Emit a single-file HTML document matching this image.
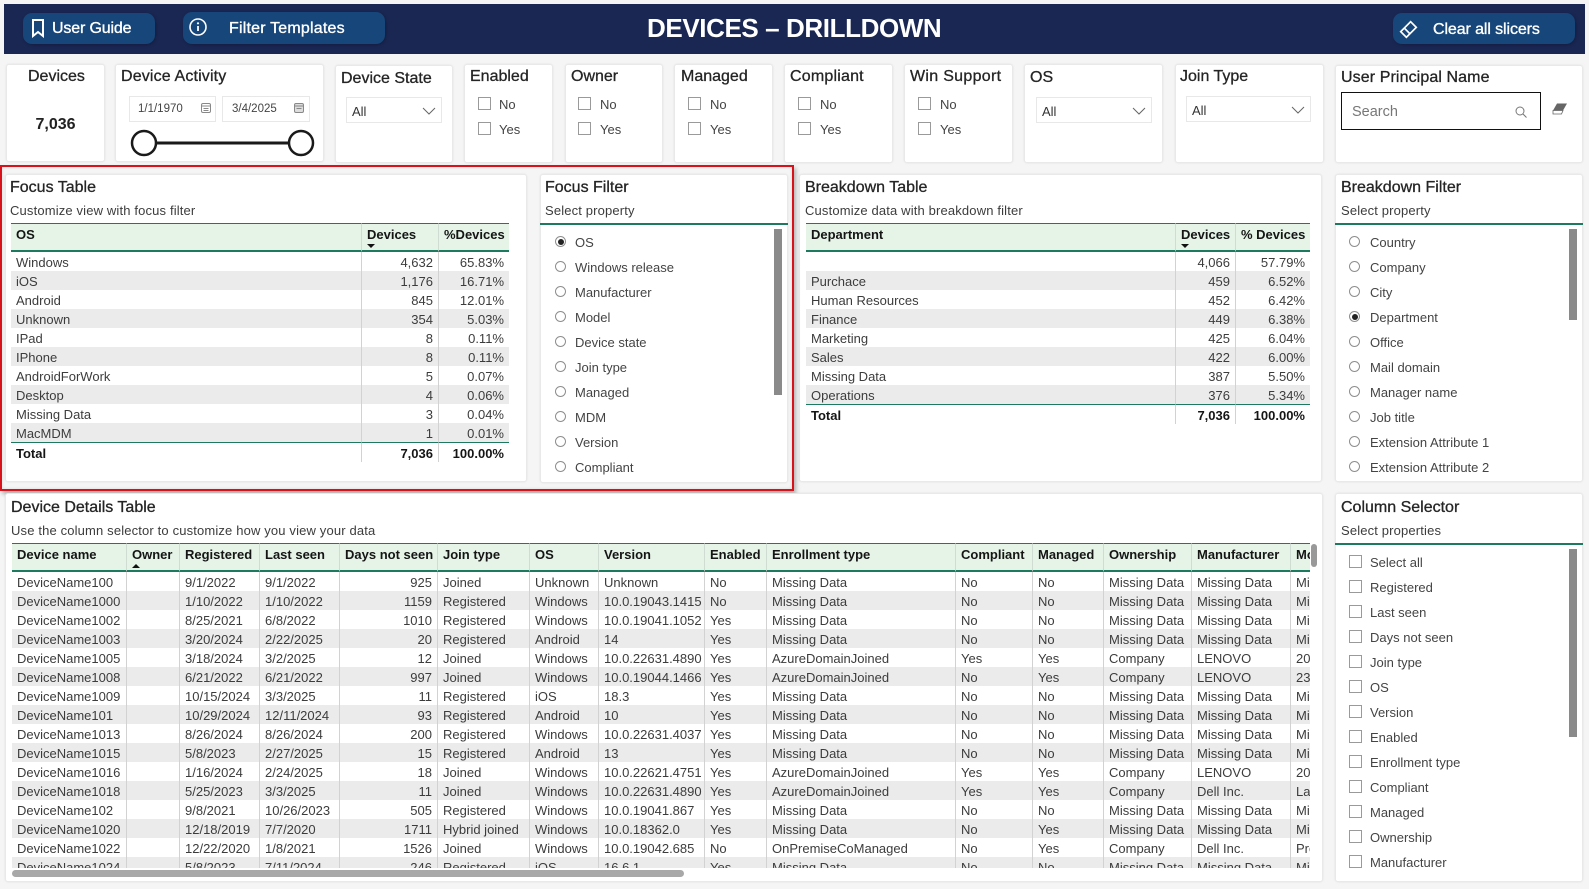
<!DOCTYPE html>
<html lang="en">
<head>
<meta charset="utf-8">
<title>Devices – Drilldown</title>
<style>
*{box-sizing:border-box}
html,body{margin:0;padding:0}
body{width:1589px;height:889px;position:relative;overflow:hidden;background:#f5f5f5;font-family:"Liberation Sans",sans-serif;color:#3a3a3a;font-size:13px}
.a,.t,.s,.l,.bt,i,.c{position:absolute}
.c{background:#fff;border:1px solid #e9e9e9;border-radius:3px;box-shadow:0 0 2px rgba(0,0,0,.08)}
.t{font-size:16px;line-height:20px;color:#252525;letter-spacing:0;-webkit-text-stroke:.3px #252525;white-space:nowrap}
.s{font-size:13px;line-height:18px;color:#3c3c3c;letter-spacing:.15px;white-space:nowrap}
.l{font-size:13px;line-height:18px;color:#444;white-space:nowrap}
.bt{background:#17467a;border-radius:9px;box-shadow:1px 1px 3px rgba(0,0,0,.25)}
.bx{position:absolute;color:#fff;font-size:16px;line-height:20px;letter-spacing:-.15px;-webkit-text-stroke:.35px #fff;white-space:nowrap}
i.k{width:13px;height:13px;border:1px solid #9a9a9a;background:#fff}
i.r{width:11px;height:11px;border:1px solid #8e8e8e;border-radius:50%;background:#fff}
i.r.on:after{content:"";position:absolute;left:1.5px;top:1.5px;width:6px;height:6px;border-radius:50%;background:#222}
.dd{position:absolute;height:26px;border:1px solid #e8e8e8;background:#fff;line-height:28px;padding-left:5px;font-size:13px;color:#333}
.ln{position:absolute;height:1.5px;background:#1d7a5f}
.sb{position:absolute;width:8px;background:#8a8a8a}
table{position:absolute;border-collapse:separate;border-spacing:0;table-layout:fixed;font-size:13px}
th{height:29px;background:#e5f4e7;border-top:1px solid #1d7a5f;border-bottom:2px solid #1d7a5f;border-right:1px solid #cfdcd2;text-align:left;vertical-align:top;padding:3px 4px 0 5px;line-height:16px;color:#151515;white-space:nowrap;overflow:hidden;position:relative}
td{height:19px;line-height:17px;padding:2px 5px 0;white-space:nowrap;overflow:hidden;border-right:1px solid #d2d2d2;color:#3c3c3c}
th:last-child,td:last-child{border-right:0}
tbody tr:nth-child(even) td{background:#ebebeb}
td.n,tfoot td.n{text-align:right}
tfoot td{height:20px;line-height:17px;padding-top:2px;font-weight:bold;color:#151515;border-top:1.5px solid #1d7a5f}
.dn,.up{position:absolute;width:0;height:0;border-left:4px solid transparent;border-right:4px solid transparent}
.dn{border-top:4px solid #111}
.up{border-bottom:4px solid #111}
</style>
</head>
<body>

<!-- header -->
<div class="a" style="left:4px;top:4px;width:1581px;height:50px;background:#1a2753"></div>
<div class="bt" style="left:23px;top:13px;width:132px;height:31px"></div>
<svg class="a" style="left:30px;top:18px" width="16" height="20" viewBox="0 0 16 20"><path d="M3 2h10v16l-5-4-5 4z" fill="none" stroke="#fff" stroke-width="2"/></svg>
<div class="bx" style="left:52px;top:19px">User Guide</div>
<div class="bt" style="left:183px;top:12px;width:202px;height:32px"></div>
<svg class="a" style="left:188px;top:17px" width="20" height="20" viewBox="0 0 20 20"><circle cx="10" cy="10" r="8" fill="none" stroke="#fff" stroke-width="1.6"/><path d="M10 9v5" stroke="#fff" stroke-width="1.8"/><circle cx="10" cy="6.3" r="1.1" fill="#fff"/></svg>
<div class="bx" style="left:229px;top:19px;letter-spacing:.2px">Filter Templates</div>
<div class="a" style="left:647px;top:12px;width:300px;line-height:33px;color:#fff;font-size:26px;font-weight:bold;letter-spacing:-.4px;white-space:nowrap">DEVICES – DRILLDOWN</div>
<div class="bt" style="left:1393px;top:13px;width:182px;height:31px"></div>
<svg class="a" style="left:1398px;top:19px" width="21" height="21" viewBox="0 0 21 21"><g transform="rotate(-45 10.500 10.500)" fill="none" stroke="#fff" stroke-width="1.700"><rect x="3.500" y="6.500" width="14" height="8"/><path d="M8.500 6.500v8"/></g></svg>
<div class="bx" style="left:1433px;top:20px;letter-spacing:-.1px">Clear all slicers</div>

<!-- slicer cards -->
<div class="c" style="left:6px;top:64px;width:99px;height:98px"></div>
<div class="t" style="left:28px;top:67px">Devices</div>
<div class="a" style="left:6px;top:115px;width:99px;text-align:center;font-size:16px;line-height:20px;font-weight:bold;color:#222">7,036</div>

<div class="c" style="left:115px;top:64px;width:209px;height:98px"></div>
<div class="t" style="left:121px;top:67px;letter-spacing:.15px">Device Activity</div>
<div class="a" style="left:129px;top:96px;width:87px;height:26px;border:1px solid #e8e8e8;font-size:11.5px;line-height:25px;padding-left:8px;color:#444">1/1/1970</div>
<svg class="a" style="left:200px;top:102px" width="12" height="12" viewBox="0 0 12 12"><rect x="1.500" y="1.500" width="9" height="9" rx="1.500" fill="none" stroke="#888"/><path d="M2 4h8M3.500 6.500h5M3.500 8.500h5" stroke="#888"/></svg>
<div class="a" style="left:222px;top:96px;width:88px;height:26px;border:1px solid #e8e8e8;font-size:11.5px;line-height:25px;padding-left:9px;color:#444">3/4/2025</div>
<svg class="a" style="left:293px;top:102px" width="12" height="12" viewBox="0 0 12 12"><rect x="1.500" y="1.500" width="9" height="9" rx="1.500" fill="#ddd" stroke="#888"/><path d="M2 4h8M3.500 6.500h5" stroke="#888"/></svg>
<svg class="a" style="left:127px;top:126px" width="190" height="34" viewBox="0 0 190 34"><path d="M17 17h157" stroke="#1a1a1a" stroke-width="3"/><circle cx="17" cy="17" r="12" fill="#fff" stroke="#1a1a1a" stroke-width="2.500"/><circle cx="174" cy="17" r="12" fill="#fff" stroke="#1a1a1a" stroke-width="2.500"/></svg>

<div class="c" style="left:335px;top:65px;width:118px;height:98px"></div>
<div class="t" style="left:341px;top:69px">Device State</div>
<div class="dd" style="left:346px;top:97px;width:96px">All</div>
<svg class="a" style="left:422px;top:106px" width="14" height="10" viewBox="0 0 14 10"><path d="M1 2l6 6 6-6" fill="none" stroke="#666"/></svg>

<div class="c" style="left:464px;top:64px;width:89px;height:99px"></div>
<div class="t" style="left:470px;top:67px">Enabled</div>
<i class="k" style="left:478px;top:97px"></i><div class="l" style="left:499px;top:96px">No</div>
<i class="k" style="left:478px;top:122px"></i><div class="l" style="left:499px;top:121px">Yes</div>

<div class="c" style="left:565px;top:64px;width:98px;height:99px"></div>
<div class="t" style="left:571px;top:67px">Owner</div>
<i class="k" style="left:578px;top:97px"></i><div class="l" style="left:600px;top:96px">No</div>
<i class="k" style="left:578px;top:122px"></i><div class="l" style="left:600px;top:121px">Yes</div>

<div class="c" style="left:674px;top:64px;width:99px;height:99px"></div>
<div class="t" style="left:681px;top:67px">Managed</div>
<i class="k" style="left:688px;top:97px"></i><div class="l" style="left:710px;top:96px">No</div>
<i class="k" style="left:688px;top:122px"></i><div class="l" style="left:710px;top:121px">Yes</div>

<div class="c" style="left:784px;top:64px;width:109px;height:99px"></div>
<div class="t" style="left:790px;top:67px;letter-spacing:.2px">Compliant</div>
<i class="k" style="left:798px;top:97px"></i><div class="l" style="left:820px;top:96px">No</div>
<i class="k" style="left:798px;top:122px"></i><div class="l" style="left:820px;top:121px">Yes</div>

<div class="c" style="left:904px;top:64px;width:109px;height:99px"></div>
<div class="t" style="left:910px;top:67px;letter-spacing:.3px">Win Support</div>
<i class="k" style="left:918px;top:97px"></i><div class="l" style="left:940px;top:96px">No</div>
<i class="k" style="left:918px;top:122px"></i><div class="l" style="left:940px;top:121px">Yes</div>

<div class="c" style="left:1024px;top:64px;width:139px;height:99px"></div>
<div class="t" style="left:1030px;top:68px">OS</div>
<div class="dd" style="left:1036px;top:97px;width:116px">All</div>
<svg class="a" style="left:1132px;top:106px" width="14" height="10" viewBox="0 0 14 10"><path d="M1 2l6 6 6-6" fill="none" stroke="#666"/></svg>

<div class="c" style="left:1175px;top:64px;width:149px;height:99px"></div>
<div class="t" style="left:1180px;top:67px">Join Type</div>
<div class="dd" style="left:1186px;top:96px;width:125px">All</div>
<svg class="a" style="left:1291px;top:105px" width="14" height="10" viewBox="0 0 14 10"><path d="M1 2l6 6 6-6" fill="none" stroke="#666"/></svg>

<div class="c" style="left:1335px;top:65px;width:248px;height:98px"></div>
<div class="t" style="left:1341px;top:68px;letter-spacing:.1px">User Principal Name</div>
<div class="a" style="left:1341px;top:92px;width:200px;height:38px;border:1.500px solid #111;background:#fff;font-size:14.500px;line-height:38px;padding-left:10px;color:#777">Search</div>
<svg class="a" style="left:1514px;top:105px" width="14" height="14" viewBox="0 0 14 14"><circle cx="6" cy="6" r="4" fill="none" stroke="#777"/><path d="M9 9l3.500 3.500" stroke="#777"/></svg>
<svg class="a" style="left:1552px;top:102px" width="16" height="14" viewBox="0 0 16 14"><path d="M5 1.500h10l-4 7H1z" fill="#666"/><path d="M1 8.500h10l-1.500 3.500H1z" fill="#fff" stroke="#666" stroke-width=".8"/></svg>

<!-- middle row cards -->
<div class="c" style="left:5px;top:174px;width:522px;height:308px"></div>
<div class="c" style="left:540px;top:174px;width:248px;height:309px"></div>
<div class="c" style="left:799px;top:174px;width:523px;height:308px"></div>
<div class="c" style="left:1335px;top:174px;width:248px;height:308px"></div>

<!-- Focus Table -->
<div class="t" style="left:10px;top:178px">Focus Table</div>
<div class="s" style="left:10px;top:202px">Customize view with focus filter</div>
<table style="left:11px;top:223px;width:498px">
<col style="width:351px"><col style="width:77px"><col style="width:70px">
<thead><tr><th>OS</th><th>Devices<span class="dn" style="left:2px;top:20px;margin-left:3px"></span></th><th>%Devices</th></tr></thead>
<tbody>
<tr><td>Windows</td><td class="n">4,632</td><td class="n">65.83%</td></tr>
<tr><td>iOS</td><td class="n">1,176</td><td class="n">16.71%</td></tr>
<tr><td>Android</td><td class="n">845</td><td class="n">12.01%</td></tr>
<tr><td>Unknown</td><td class="n">354</td><td class="n">5.03%</td></tr>
<tr><td>IPad</td><td class="n">8</td><td class="n">0.11%</td></tr>
<tr><td>IPhone</td><td class="n">8</td><td class="n">0.11%</td></tr>
<tr><td>AndroidForWork</td><td class="n">5</td><td class="n">0.07%</td></tr>
<tr><td>Desktop</td><td class="n">4</td><td class="n">0.06%</td></tr>
<tr><td>Missing Data</td><td class="n">3</td><td class="n">0.04%</td></tr>
<tr><td>MacMDM</td><td class="n">1</td><td class="n">0.01%</td></tr>
</tbody>
<tfoot><tr><td>Total</td><td class="n">7,036</td><td class="n">100.00%</td></tr></tfoot>
</table>

<!-- Focus Filter -->
<div class="t" style="left:545px;top:178px">Focus Filter</div>
<div class="s" style="left:545px;top:202px">Select property</div>
<div class="ln" style="left:540px;top:223px;width:248px"></div>
<i class="r on" style="left:555px;top:236px"></i><div class="l" style="left:575px;top:234px">OS</div>
<i class="r" style="left:555px;top:261px"></i><div class="l" style="left:575px;top:259px">Windows release</div>
<i class="r" style="left:555px;top:286px"></i><div class="l" style="left:575px;top:284px">Manufacturer</div>
<i class="r" style="left:555px;top:311px"></i><div class="l" style="left:575px;top:309px">Model</div>
<i class="r" style="left:555px;top:336px"></i><div class="l" style="left:575px;top:334px">Device state</div>
<i class="r" style="left:555px;top:361px"></i><div class="l" style="left:575px;top:359px">Join type</div>
<i class="r" style="left:555px;top:386px"></i><div class="l" style="left:575px;top:384px">Managed</div>
<i class="r" style="left:555px;top:411px"></i><div class="l" style="left:575px;top:409px">MDM</div>
<i class="r" style="left:555px;top:436px"></i><div class="l" style="left:575px;top:434px">Version</div>
<i class="r" style="left:555px;top:461px"></i><div class="l" style="left:575px;top:459px">Compliant</div>
<div class="sb" style="left:774px;top:229px;height:166px"></div>

<!-- Breakdown Table -->
<div class="t" style="left:805px;top:178px">Breakdown Table</div>
<div class="s" style="left:805px;top:202px">Customize data with breakdown filter</div>
<table style="left:806px;top:223px;width:504px">
<col style="width:370px"><col style="width:60px"><col style="width:74px">
<thead><tr><th>Department</th><th>Devices<span class="dn" style="left:2px;top:20px;margin-left:3px"></span></th><th>% Devices</th></tr></thead>
<tbody>
<tr><td>&nbsp;</td><td class="n">4,066</td><td class="n">57.79%</td></tr>
<tr><td>Purchace</td><td class="n">459</td><td class="n">6.52%</td></tr>
<tr><td>Human Resources</td><td class="n">452</td><td class="n">6.42%</td></tr>
<tr><td>Finance</td><td class="n">449</td><td class="n">6.38%</td></tr>
<tr><td>Marketing</td><td class="n">425</td><td class="n">6.04%</td></tr>
<tr><td>Sales</td><td class="n">422</td><td class="n">6.00%</td></tr>
<tr><td>Missing Data</td><td class="n">387</td><td class="n">5.50%</td></tr>
<tr><td>Operations</td><td class="n">376</td><td class="n">5.34%</td></tr>
</tbody>
<tfoot><tr><td>Total</td><td class="n">7,036</td><td class="n">100.00%</td></tr></tfoot>
</table>

<!-- Breakdown Filter -->
<div class="t" style="left:1341px;top:178px">Breakdown Filter</div>
<div class="s" style="left:1341px;top:202px">Select property</div>
<div class="ln" style="left:1335px;top:223px;width:248px"></div>
<i class="r" style="left:1349px;top:236px"></i><div class="l" style="left:1370px;top:234px">Country</div>
<i class="r" style="left:1349px;top:261px"></i><div class="l" style="left:1370px;top:259px">Company</div>
<i class="r" style="left:1349px;top:286px"></i><div class="l" style="left:1370px;top:284px">City</div>
<i class="r on" style="left:1349px;top:311px"></i><div class="l" style="left:1370px;top:309px">Department</div>
<i class="r" style="left:1349px;top:336px"></i><div class="l" style="left:1370px;top:334px">Office</div>
<i class="r" style="left:1349px;top:361px"></i><div class="l" style="left:1370px;top:359px">Mail domain</div>
<i class="r" style="left:1349px;top:386px"></i><div class="l" style="left:1370px;top:384px">Manager name</div>
<i class="r" style="left:1349px;top:411px"></i><div class="l" style="left:1370px;top:409px">Job title</div>
<i class="r" style="left:1349px;top:436px"></i><div class="l" style="left:1370px;top:434px">Extension Attribute 1</div>
<i class="r" style="left:1349px;top:461px"></i><div class="l" style="left:1370px;top:459px">Extension Attribute 2</div>
<div class="sb" style="left:1569px;top:229px;height:91px"></div>

<!-- Red highlight -->
<div class="a" style="left:0;top:165px;width:794px;height:326px;border:2px solid #d8121b;box-shadow:2px 3px 4px rgba(0,0,0,.28),inset 0 0 3px rgba(0,0,0,.12)"></div>

<!-- Bottom cards -->
<div class="c" style="left:5px;top:493px;width:1318px;height:389px"></div>
<div class="c" style="left:1335px;top:493px;width:248px;height:389px"></div>

<!-- Device Details -->
<div class="t" style="left:11px;top:498px">Device Details Table</div>
<div class="s" style="left:11px;top:522px">Use the column selector to customize how you view your data</div>
<div class="a" style="left:12px;top:543px;width:1298px;height:325px;overflow:hidden">
<table style="left:0;top:0;width:1301px">
<col style="width:115px"><col style="width:53px"><col style="width:80px"><col style="width:80px"><col style="width:98px"><col style="width:92px"><col style="width:69px"><col style="width:106px"><col style="width:62px"><col style="width:189px"><col style="width:77px"><col style="width:71px"><col style="width:88px"><col style="width:99px"><col style="width:22px">
<thead><tr><th>Device name</th><th>Owner<span class="up" style="left:5px;top:20px"></span></th><th>Registered</th><th>Last seen</th><th>Days not seen</th><th>Join type</th><th>OS</th><th>Version</th><th>Enabled</th><th>Enrollment type</th><th>Compliant</th><th>Managed</th><th>Ownership</th><th>Manufacturer</th><th>Model</th></tr></thead>
<tbody>
<tr><td>DeviceName100</td><td></td><td>9/1/2022</td><td>9/1/2022</td><td class="n">925</td><td>Joined</td><td>Unknown</td><td>Unknown</td><td>No</td><td>Missing Data</td><td>No</td><td>No</td><td>Missing Data</td><td>Missing Data</td><td>Missing</td></tr>
<tr><td>DeviceName1000</td><td></td><td>1/10/2022</td><td>1/10/2022</td><td class="n">1159</td><td>Registered</td><td>Windows</td><td>10.0.19043.1415</td><td>No</td><td>Missing Data</td><td>No</td><td>No</td><td>Missing Data</td><td>Missing Data</td><td>Missing</td></tr>
<tr><td>DeviceName1002</td><td></td><td>8/25/2021</td><td>6/8/2022</td><td class="n">1010</td><td>Registered</td><td>Windows</td><td>10.0.19041.1052</td><td>Yes</td><td>Missing Data</td><td>No</td><td>No</td><td>Missing Data</td><td>Missing Data</td><td>Missing</td></tr>
<tr><td>DeviceName1003</td><td></td><td>3/20/2024</td><td>2/22/2025</td><td class="n">20</td><td>Registered</td><td>Android</td><td>14</td><td>Yes</td><td>Missing Data</td><td>No</td><td>No</td><td>Missing Data</td><td>Missing Data</td><td>Missing</td></tr>
<tr><td>DeviceName1005</td><td></td><td>3/18/2024</td><td>3/2/2025</td><td class="n">12</td><td>Joined</td><td>Windows</td><td>10.0.22631.4890</td><td>Yes</td><td>AzureDomainJoined</td><td>Yes</td><td>Yes</td><td>Company</td><td>LENOVO</td><td>20Q</td></tr>
<tr><td>DeviceName1008</td><td></td><td>6/21/2022</td><td>6/21/2022</td><td class="n">997</td><td>Joined</td><td>Windows</td><td>10.0.19044.1466</td><td>Yes</td><td>AzureDomainJoined</td><td>No</td><td>Yes</td><td>Company</td><td>LENOVO</td><td>234</td></tr>
<tr><td>DeviceName1009</td><td></td><td>10/15/2024</td><td>3/3/2025</td><td class="n">11</td><td>Registered</td><td>iOS</td><td>18.3</td><td>Yes</td><td>Missing Data</td><td>No</td><td>No</td><td>Missing Data</td><td>Missing Data</td><td>Missing</td></tr>
<tr><td>DeviceName101</td><td></td><td>10/29/2024</td><td>12/11/2024</td><td class="n">93</td><td>Registered</td><td>Android</td><td>10</td><td>Yes</td><td>Missing Data</td><td>No</td><td>No</td><td>Missing Data</td><td>Missing Data</td><td>Missing</td></tr>
<tr><td>DeviceName1013</td><td></td><td>8/26/2024</td><td>8/26/2024</td><td class="n">200</td><td>Registered</td><td>Windows</td><td>10.0.22631.4037</td><td>Yes</td><td>Missing Data</td><td>No</td><td>No</td><td>Missing Data</td><td>Missing Data</td><td>Missing</td></tr>
<tr><td>DeviceName1015</td><td></td><td>5/8/2023</td><td>2/27/2025</td><td class="n">15</td><td>Registered</td><td>Android</td><td>13</td><td>Yes</td><td>Missing Data</td><td>No</td><td>No</td><td>Missing Data</td><td>Missing Data</td><td>Missing</td></tr>
<tr><td>DeviceName1016</td><td></td><td>1/16/2024</td><td>2/24/2025</td><td class="n">18</td><td>Joined</td><td>Windows</td><td>10.0.22621.4751</td><td>Yes</td><td>AzureDomainJoined</td><td>Yes</td><td>Yes</td><td>Company</td><td>LENOVO</td><td>20</td></tr>
<tr><td>DeviceName1018</td><td></td><td>5/25/2023</td><td>3/3/2025</td><td class="n">11</td><td>Joined</td><td>Windows</td><td>10.0.22631.4890</td><td>Yes</td><td>AzureDomainJoined</td><td>Yes</td><td>Yes</td><td>Company</td><td>Dell Inc.</td><td>Latitude</td></tr>
<tr><td>DeviceName102</td><td></td><td>9/8/2021</td><td>10/26/2023</td><td class="n">505</td><td>Registered</td><td>Windows</td><td>10.0.19041.867</td><td>Yes</td><td>Missing Data</td><td>No</td><td>No</td><td>Missing Data</td><td>Missing Data</td><td>Missing</td></tr>
<tr><td>DeviceName1020</td><td></td><td>12/18/2019</td><td>7/7/2020</td><td class="n">1711</td><td>Hybrid joined</td><td>Windows</td><td>10.0.18362.0</td><td>Yes</td><td>Missing Data</td><td>No</td><td>Yes</td><td>Missing Data</td><td>Missing Data</td><td>Missing</td></tr>
<tr><td>DeviceName1022</td><td></td><td>12/22/2020</td><td>1/8/2021</td><td class="n">1526</td><td>Joined</td><td>Windows</td><td>10.0.19042.685</td><td>No</td><td>OnPremiseCoManaged</td><td>No</td><td>Yes</td><td>Company</td><td>Dell Inc.</td><td>Precision</td></tr>
<tr><td>DeviceName1024</td><td></td><td>5/8/2023</td><td>7/11/2024</td><td class="n">246</td><td>Registered</td><td>iOS</td><td>16.6.1</td><td>Yes</td><td>Missing Data</td><td>No</td><td>No</td><td>Missing Data</td><td>Missing Data</td><td>Missing</td></tr>
</tbody>
</table>
</div>
<div class="a" style="left:12px;top:870px;width:672px;height:7px;background:#a8a8a8;border-radius:4px"></div>
<div class="a" style="left:1311px;top:544px;width:6px;height:23px;background:#999;border-radius:3px"></div>

<!-- Column Selector -->
<div class="t" style="left:1341px;top:498px">Column Selector</div>
<div class="s" style="left:1341px;top:522px">Select properties</div>
<div class="ln" style="left:1335px;top:543px;width:248px"></div>
<i class="k" style="left:1349px;top:555px"></i><div class="l" style="left:1370px;top:554px">Select all</div>
<i class="k" style="left:1349px;top:580px"></i><div class="l" style="left:1370px;top:579px">Registered</div>
<i class="k" style="left:1349px;top:605px"></i><div class="l" style="left:1370px;top:604px">Last seen</div>
<i class="k" style="left:1349px;top:630px"></i><div class="l" style="left:1370px;top:629px">Days not seen</div>
<i class="k" style="left:1349px;top:655px"></i><div class="l" style="left:1370px;top:654px">Join type</div>
<i class="k" style="left:1349px;top:680px"></i><div class="l" style="left:1370px;top:679px">OS</div>
<i class="k" style="left:1349px;top:705px"></i><div class="l" style="left:1370px;top:704px">Version</div>
<i class="k" style="left:1349px;top:730px"></i><div class="l" style="left:1370px;top:729px">Enabled</div>
<i class="k" style="left:1349px;top:755px"></i><div class="l" style="left:1370px;top:754px">Enrollment type</div>
<i class="k" style="left:1349px;top:780px"></i><div class="l" style="left:1370px;top:779px">Compliant</div>
<i class="k" style="left:1349px;top:805px"></i><div class="l" style="left:1370px;top:804px">Managed</div>
<i class="k" style="left:1349px;top:830px"></i><div class="l" style="left:1370px;top:829px">Ownership</div>
<i class="k" style="left:1349px;top:855px"></i><div class="l" style="left:1370px;top:854px">Manufacturer</div>
<div class="sb" style="left:1569px;top:549px;height:188px"></div>

</body>
</html>
